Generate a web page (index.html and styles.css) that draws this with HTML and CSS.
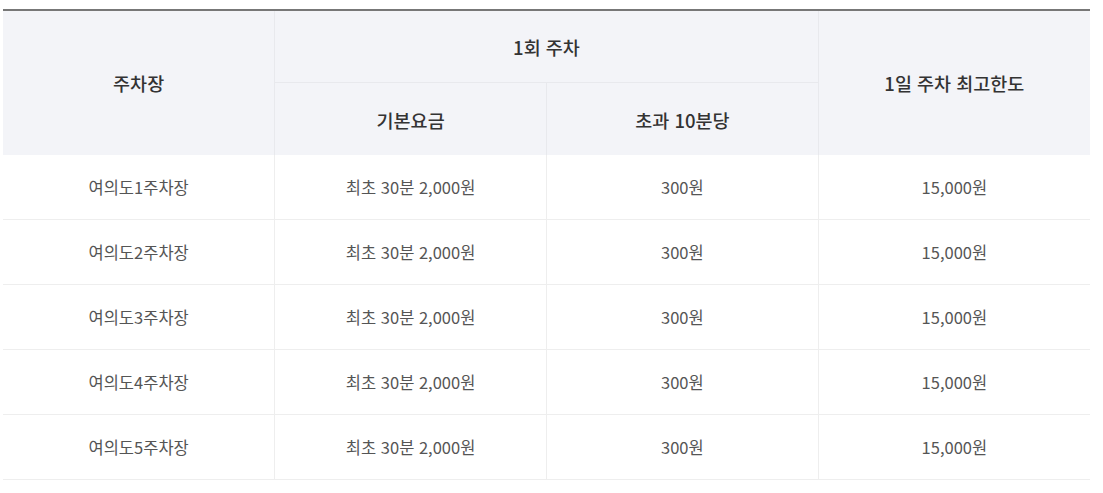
FILE: index.html
```html
<!DOCTYPE html>
<html lang="ko">
<head>
<meta charset="utf-8">
<link rel="stylesheet" href="styles.css">
</head>
<body>
<table class="fee-table">
  <colgroup>
    <col class="c"><col class="c"><col class="c"><col class="c">
  </colgroup>
  <thead>
    <tr class="h1">
      <th rowspan="2">주차장</th>
      <th colspan="2" class="group">1회 주차</th>
      <th rowspan="2" class="last">1일 주차 최고한도</th>
    </tr>
    <tr class="h2">
      <th class="sub">기본요금</th>
      <th class="sub">초과 10분당</th>
    </tr>
  </thead>
  <tbody>
    <tr><td>여의도1주차장</td><td>최초 30분 2,000원</td><td>300원</td><td class="last">15,000원</td></tr>
    <tr><td>여의도2주차장</td><td>최초 30분 2,000원</td><td>300원</td><td class="last">15,000원</td></tr>
    <tr><td>여의도3주차장</td><td>최초 30분 2,000원</td><td>300원</td><td class="last">15,000원</td></tr>
    <tr><td>여의도4주차장</td><td>최초 30분 2,000원</td><td>300원</td><td class="last">15,000원</td></tr>
    <tr><td>여의도5주차장</td><td>최초 30분 2,000원</td><td>300원</td><td class="last">15,000원</td></tr>
  </tbody>
</table>
</body>
</html>
```
FILE: styles.css
```css
html, body {
  margin: 0;
  padding: 0;
  background: #fff;
}
body {
  padding: 9px 0 0 3px;
  font-family: "Noto Sans CJK KR", "Noto Sans", sans-serif;
}
.fee-table {
  width: 1087px;
  border-collapse: collapse;
  table-layout: fixed;
  border-top: 2px solid #777;
}
.fee-table th {
  background: #f3f4f8;
  color: #333;
  font-size: 18.5px;
  font-weight: 500;
  text-align: center;
  border-right: 1px solid #e8e9ed;
  padding: 0;
}
.fee-table th.last { border-right: none; }
.fee-table .h1 th { height: 71px; }
.fee-table .h1 th.group { border-bottom: 1px solid #e8e9ed; }
.fee-table .h2 th { height: 70px; padding-top: 2px; }
.fee-table td {
  height: 64px;
  padding: 0;
  text-align: center;
  font-size: 16.5px;
  color: #555;
  border-bottom: 1px solid #eeeeee;
  border-right: 1px solid #eeeeee;
}
.fee-table td.last { border-right: none; }
```
